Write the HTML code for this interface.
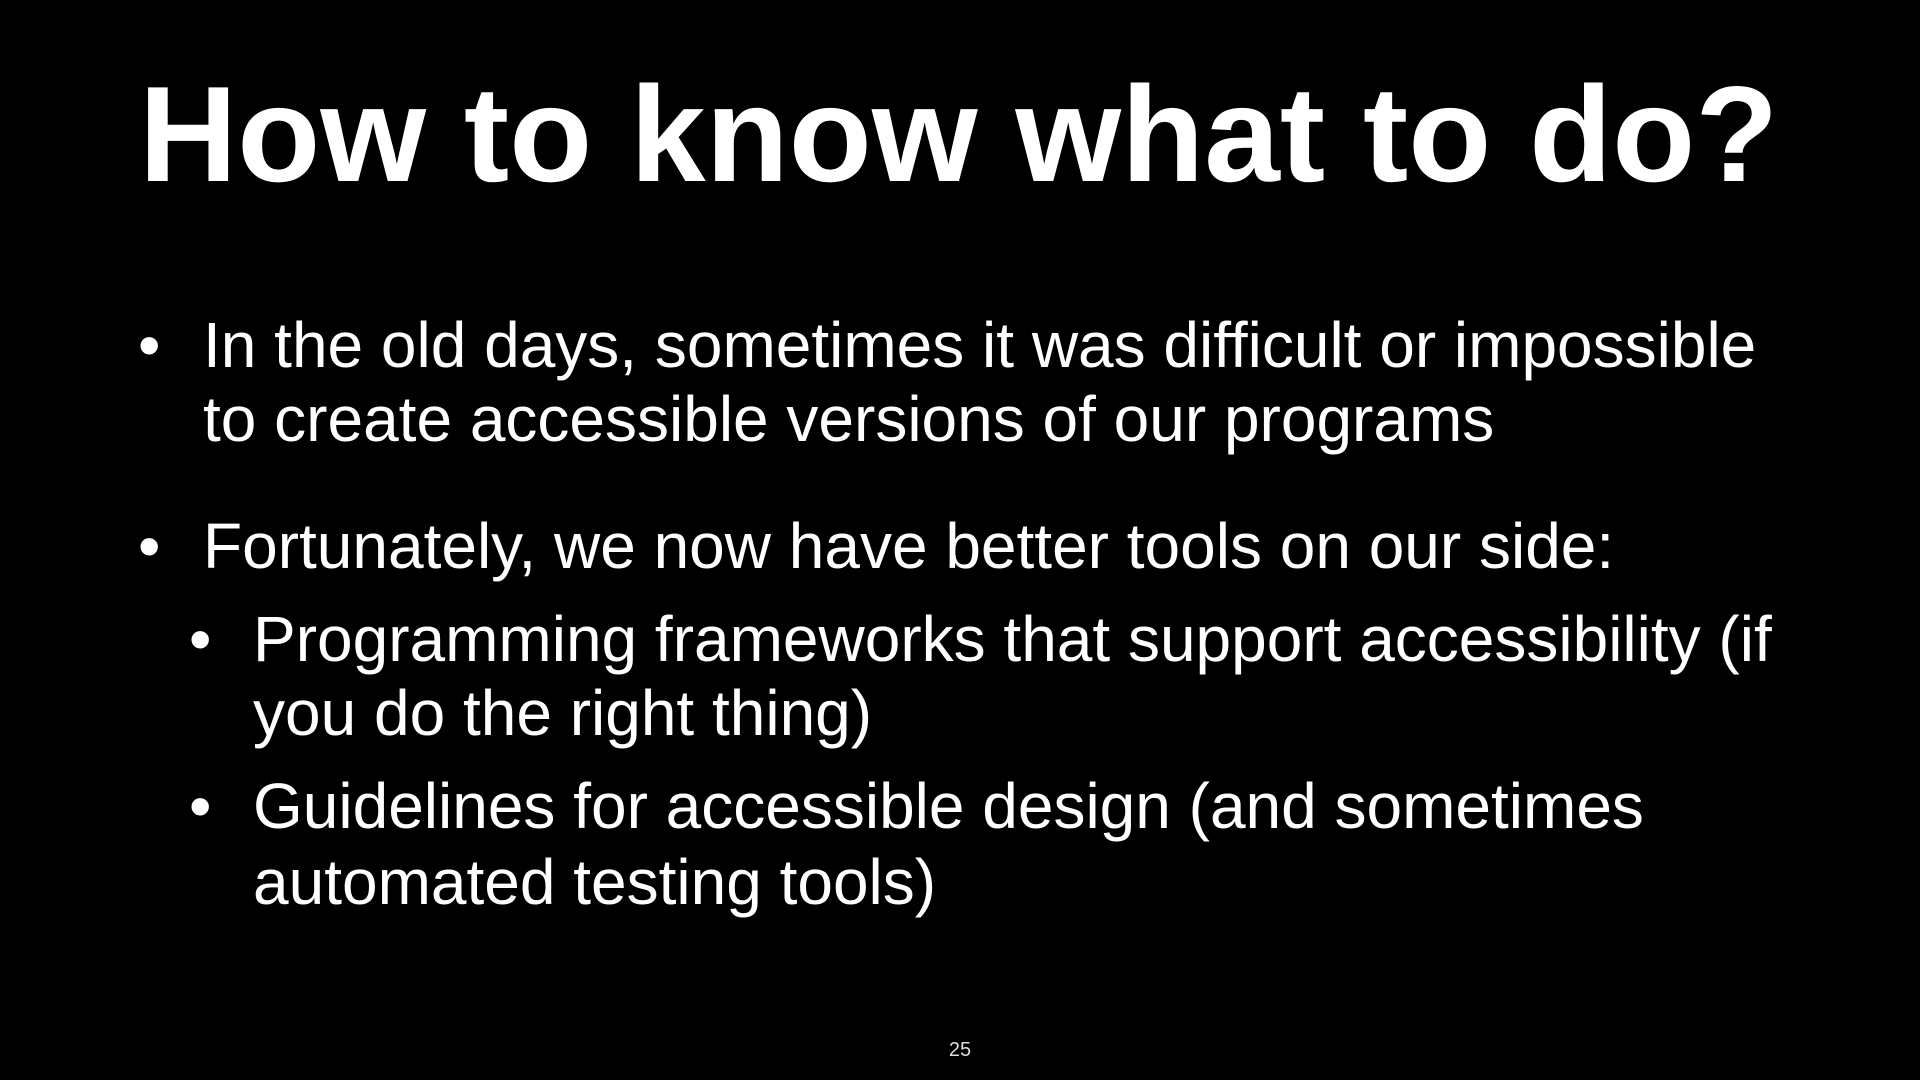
<!DOCTYPE html>
<html><head><meta charset="utf-8"><style>
html,body{margin:0;padding:0;background:#000;width:1920px;height:1080px;overflow:hidden}
body{position:relative;font-family:"Liberation Sans",Arial,sans-serif;color:#fff}
.l{position:absolute;white-space:nowrap;font-size:64px;line-height:64px}
.t{position:absolute;left:139px;top:66px;font-size:136px;line-height:136px;font-weight:bold;white-space:nowrap;letter-spacing:0}
.n{position:absolute;left:0;width:1920px;text-align:center;top:1040px;font-size:20px;line-height:20px;color:#ddd}
</style></head><body>
<div class="t">How to know what to do?</div>
<div class="l" style="left:138px;top:313px">•</div>
<div class="l" style="left:203px;top:313px">In the old days, sometimes it was difficult or impossible</div>
<div class="l" style="left:203px;top:387px">to create accessible versions of our programs</div>
<div class="l" style="left:138px;top:514px">•</div>
<div class="l" style="left:203px;top:514px">Fortunately, we now have better tools on our side:</div>
<div class="l" style="left:189px;top:607px">•</div>
<div class="l" style="left:253px;top:607px">Programming frameworks that support accessibility (if</div>
<div class="l" style="left:253px;top:681px">you do the right thing)</div>
<div class="l" style="left:189px;top:774px">•</div>
<div class="l" style="left:253px;top:774px">Guidelines for accessible design (and sometimes</div>
<div class="l" style="left:253px;top:850px">automated testing tools)</div>
<div class="n">25</div>
</body></html>
